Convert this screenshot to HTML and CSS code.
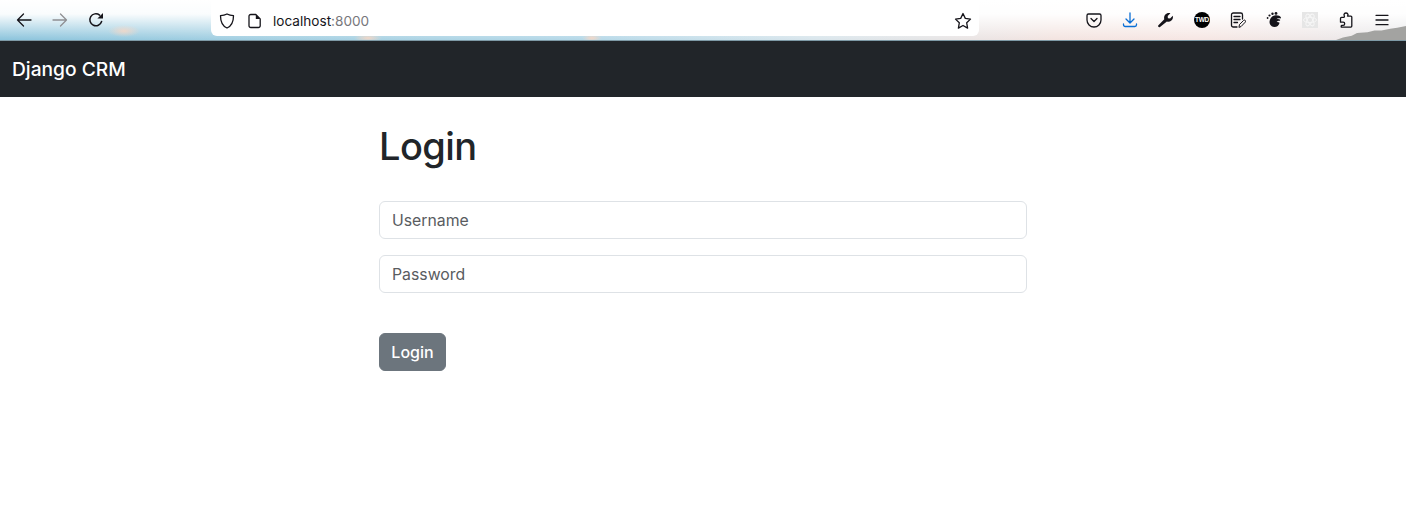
FILE: index.html
```html
<!DOCTYPE html>
<html lang="en">
<head>
<meta charset="utf-8">
<title>Django CRM</title>
<link rel="stylesheet" href="styles.css">
</head>
<body>
<header class="toolbar">
  <svg class="mountain" viewBox="0 0 80 16" aria-hidden="true"><path d="M0 16 L8 13 L18 11 L24 8 L36 7 L44 5 L52 5 L62 3 L70 2 L80 0 V16 Z" fill="#a3a3a1"/></svg>
  <div class="nav-buttons">
    <span class="tool"><svg viewBox="0 0 16 16"><path d="M15 8H1.500M7.500 2L1.500 8l6 6" class="ln thin"/></svg></span>
    <span class="tool"><svg viewBox="0 0 16 16"><path d="M1 8h13.500M8.500 2l6 6-6 6" class="ln thin dim"/></svg></span>
    <span class="tool"><svg viewBox="0 0 16 16"><path d="M13.600 9.500A6 6 0 1 1 11.600 3.100" class="ln"/><path d="M15 1v5.600H9.400z" fill="#15141a"/></svg></span>
  </div>
  <div class="urlbar">
    <svg class="u-shield" viewBox="0 0 16 16"><path d="M8 1C6 2 4 2.500 1.500 2.700 1.500 9 3.500 13 8 15c4.500-2 6.500-6 6.500-12.300C12 2.500 10 2 8 1z" class="ln thin"/></svg>
    <svg class="u-page" viewBox="0 0 14 16"><path d="M2.800 1.500h5l4.400 4.400v6.800a1.800 1.800 0 0 1-1.800 1.800H2.800A1.800 1.800 0 0 1 1 12.700V3.300a1.800 1.800 0 0 1 1.800-1.800z" class="ln thin"/><path d="M7.800 1.500v4.400h4.400z" fill="#15141a"/></svg>
    <span class="host">localhost<span class="port">:8000</span></span>
    <svg class="u-star" viewBox="0 0 18 18"><path d="M9 1.500l2.300 4.900 5.200.7-3.800 3.700.9 5.300L9 13.500l-4.600 2.600.9-5.300L1.500 7.100l5.200-.7z" class="ln thin"/></svg>
  </div>
  <div class="extensions">
    <span class="tool"><svg viewBox="0 0 16 16"><path d="M2.500 2h11A1.500 1.500 0 0 1 15 3.500V8a7 7 0 0 1-14 0V3.500A1.500 1.500 0 0 1 2.500 2z" class="ln thin"/><path d="M5 6.500l3 3 3-3" class="ln thin"/></svg></span>
    <span class="tool"><svg viewBox="0 0 16 16"><path d="M8 1v9.500M4 7l4 4 4-4" class="ln thin blue"/><path d="M1.500 12v.8A1.700 1.700 0 0 0 3.200 14.500h9.600a1.700 1.700 0 0 0 1.700-1.700V12" class="ln thin blue"/></svg></span>
    <span class="tool"><svg viewBox="0 0 16 16"><path d="M1.700 15.300a1.300 1.300 0 0 1-1.500-1.800L6.300 7.300C5.600 5 6.500 2.500 8.800 1.500c1.300-.6 2.500-.6 3.600-.2L9.700 4l.2 2.200 2.200.3 2.700-2.700c.4 1.800 0 3.600-1.400 4.800-1.300 1.200-3 1.500-4.500 1z" fill="#15141a"/></svg></span>
    <span class="tool"><span class="twd">TWD</span></span>
    <span class="tool"><svg viewBox="0 0 16 16"><path d="M7 15H3.300A1.800 1.800 0 0 1 1.500 13.200V2.800A1.800 1.800 0 0 1 3.300 1h7.400a1.800 1.800 0 0 1 1.800 1.800V7" class="ln thin"/><path d="M4 4.500h6M4 7.500h6M4 10.500h3.500" class="ln thin"/><path d="M9 15l.5-2.500 4-4a1.100 1.100 0 0 1 1.800 1.600l-4 4.200z" class="ln thinner"/></svg></span>
    <span class="tool"><svg viewBox="0 0 16 16"><path d="M9.500 3.200c2.500-.2 4.600.7 5.500 2.300l-.3 1c-1.800-.6-3.600-.3-4.400.7 1.300-.4 2.900-.2 3.900.5l-.2 1.100c-1.300-.1-2.700.3-3.400 1.200 1-.1 2.200.1 3 .7-.6 2.700-2.700 4.300-5.100 4.300-3 0-5-2.100-5-4.900 0-3.500 2.500-6.600 6-6.900z" fill="#15141a"/><ellipse cx="10" cy="1.400" rx="1.400" ry="1.300" fill="#15141a"/><ellipse cx="6.500" cy="1.800" rx="1.200" ry="1.200" fill="#15141a"/><ellipse cx="3.500" cy="3.500" rx="1.100" ry="1" fill="#15141a"/><ellipse cx="1.600" cy="6" rx=".9" ry=".9" fill="#15141a"/></svg></span>
    <span class="tool"><span class="react"><svg viewBox="0 0 16 16"><g class="orbit"><ellipse cx="8" cy="8" rx="6.500" ry="2.600"/><ellipse cx="8" cy="8" rx="6.500" ry="2.600" transform="rotate(60 8 8)"/><ellipse cx="8" cy="8" rx="6.500" ry="2.600" transform="rotate(120 8 8)"/></g></svg></span></span>
    <span class="tool"><svg viewBox="0 0 16 16"><path d="M6 2.500A2 2 0 0 1 8 1a2 2 0 0 1 2 1.500c.1.700-.2 1.200-.5 1.600h3.300a1 1 0 0 1 1 1v9a1 1 0 0 1-1 1H3.200v-.9c0-.5.300-.8.900-.8h1a1.600 1.600 0 0 0 0-3.200H2.500V6.400a1 1 0 0 1 1-1H5.500c.5 0 1-.500.900-1.100C6.300 3.700 6 3.200 6 2.500z" class="ln thin"/></svg></span>
    <span class="tool"><svg viewBox="0 0 16 16"><path d="M2 3.300h12M2 8h12M2 12.700h12" class="ln thin"/></svg></span>
  </div>
</header>
<nav class="navbar"><a class="brand" href="#">Django CRM</a></nav>
<main class="container">
  <h1 class="title">Login</h1>
  <form class="form">
    <input class="field" type="text" placeholder="Username">
    <input class="field" type="password" placeholder="Password">
    <button class="submit" type="button">Login</button>
  </form>
</main>
</body>
</html>
```
FILE: styles.css
```css
* { box-sizing: border-box; }

html, body {
  margin: 0;
  padding: 0;
  background: #fff;
}

body {
  font-family: Inter, "Liberation Sans", sans-serif;
  color: #212529;
  min-height: 518px;
  overflow: hidden;
}

.toolbar {
  position: relative;
  height: 41px;
  display: flex;
  align-items: flex-start;
  padding: 0 6px;
  overflow: hidden;
  border-bottom: 1px solid #7e9aa6;
  background:
    radial-gradient(ellipse 16px 6px at 124px 31px, rgba(250,215,195,.8), rgba(250,215,195,0)),
    radial-gradient(ellipse 14px 4px at 368px 38px, rgba(250,215,195,.9), rgba(250,215,195,0)),
    radial-gradient(ellipse 10px 4px at 592px 38px, rgba(250,215,195,.9), rgba(250,215,195,0)),
    linear-gradient(180deg, rgba(255,255,255,1) 0%, rgba(255,255,255,.95) 35%, rgba(255,255,255,0) 100%),
    linear-gradient(90deg, #8cc4dc 0%, #a4d0e2 20%, #b5d8e8 42%, #d9e6ec 58%, #f3e4e0 75%, #f6e6e3 85%, #e8e8ea 100%);
}

.mountain {
  position: absolute;
  right: 0;
  bottom: 0;
  width: 70px;
  height: 14px;
}

.nav-buttons,
.extensions {
  display: flex;
  flex: none;
}

.extensions { margin-left: auto; }

.tool {
  width: 36px;
  height: 40px;
  display: flex;
  align-items: center;
  justify-content: center;
  flex: none;
}

.tool svg {
  width: 16px;
  height: 16px;
  display: block;
}

.ln {
  fill: none;
  stroke: #15141a;
  stroke-width: 1.500;
  stroke-linecap: round;
  stroke-linejoin: round;
}

.ln.thin { stroke-width: 1.300; }
.ln.thinner { stroke-width: 1; }
.ln.dim { stroke: #8f8f93; }
.ln.blue { stroke: #0a6fd6; }

.urlbar {
  width: 768px;
  height: 36px;
  margin-left: 97px;
  flex: none;
  display: flex;
  align-items: center;
  padding: 5px 7px 0 8px;
  background: #fff;
  border-radius: 0 0 6px 6px;
}

.u-shield { width: 16px; height: 16px; flex: none; }
.u-page { width: 14px; height: 16px; flex: none; margin-left: 13px; }
.u-star { width: 18px; height: 18px; flex: none; margin-left: auto; }

.host {
  margin-left: 11px;
  font-size: 13.600px;
  color: #15141a;
}

.port { color: #77777c; }

.twd {
  width: 16px;
  height: 16px;
  border-radius: 50%;
  background: #000;
  color: #fff;
  font-family: "Liberation Sans", sans-serif;
  font-size: 6.500px;
  font-weight: 700;
  line-height: 16px;
  text-align: center;
  letter-spacing: -.2px;
}

.react {
  width: 16px;
  height: 16px;
  background: #e6e6e6;
}

.orbit ellipse {
  fill: none;
  stroke: #f6f6f6;
  stroke-width: 1;
}

.navbar {
  height: 56px;
  background: #212529;
  display: flex;
  align-items: center;
  padding: 0 12px;
}

.brand {
  color: #fff;
  font-size: 19.200px;
  font-weight: 500;
  text-decoration: none;
}

.container {
  width: 648px;
  margin-left: 379px;
  padding-top: 25px;
}

.title {
  margin: 0 0 31px;
  font-size: 38px;
  font-weight: 500;
  line-height: 48px;
  letter-spacing: -.6px;
  color: #212529;
}

.form {
  display: flex;
  flex-direction: column;
  align-items: flex-start;
}

.field {
  width: 100%;
  height: 38px;
  margin-bottom: 16px;
  padding: 0 12px;
  border: 1px solid #dee2e6;
  border-radius: 6px;
  background: #fff;
  font: 400 15.800px Inter, "Liberation Sans", sans-serif;
  color: #212529;
}

.field::placeholder {
  color: #595c5f;
  opacity: 1;
}

.submit {
  margin-top: 24px;
  width: 67px;
  height: 38px;
  padding: 0;
  border: 1px solid #6c757d;
  border-radius: 6px;
  background: #6c757d;
  color: #fff;
  font: 500 16px Inter, "Liberation Sans", sans-serif;
}
```
